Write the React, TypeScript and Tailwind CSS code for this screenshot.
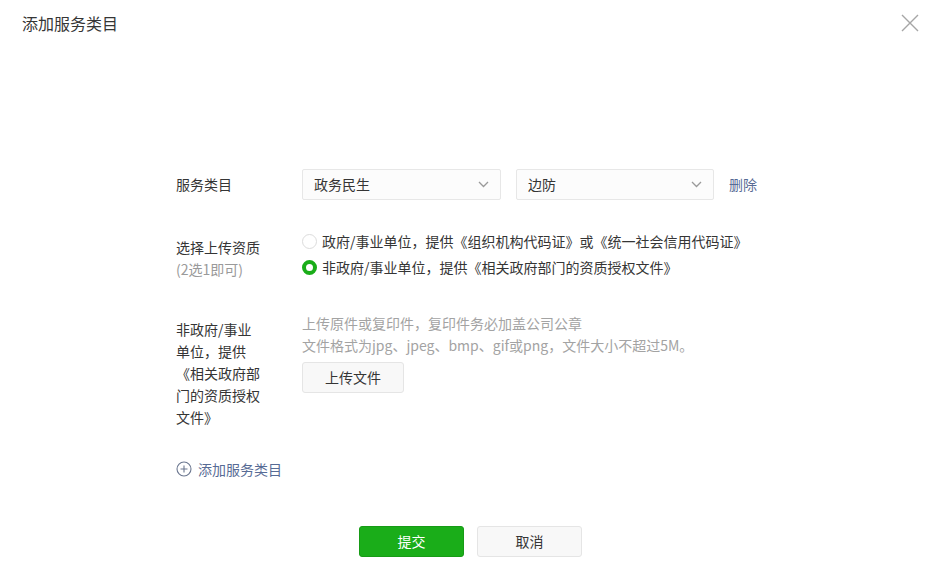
import React, { useState } from 'react';

const font = { fontFamily: '"Noto Sans CJK SC", "Noto Sans", sans-serif' };

const Chevron: React.FC = () => (
    <svg width="11" height="7" viewBox="0 0 11 7" fill="none">
        <path d="M1 1l4.5 4.5L10 1" stroke="#9a9a9a" strokeWidth="1.3" />
    </svg>
);

const Select: React.FC<{ value: string; width: string }> = ({ value, width }) => (
    <div className={`${width} h-[31px] flex items-center justify-between pl-[11px] pr-[11px] border border-[#e7e7e7] bg-[#fcfcfc] rounded-[2px] text-[14px] text-[#353535]`}>
        <span>{value}</span>
        <Chevron />
    </div>
);

const Radio: React.FC<{ checked: boolean; label: string; onClick: () => void }> = ({ checked, label, onClick }) => (
    <div className="h-[26px] flex items-center cursor-pointer" onClick={onClick}>
        {checked ? (
            <span className="w-[15px] h-[15px] rounded-full border-[4px] border-[#1aad19] bg-white box-border" />
        ) : (
            <span className="w-[15px] h-[15px] rounded-full border border-[#dcdcdc] bg-white box-border" />
        )}
        <span className="ml-[5px] text-[14px] text-[#353535]">{label}</span>
    </div>
);

export default function App() {
    const [choice, setChoice] = useState(1);

    return (
        <div className="w-[941px] h-[577px] bg-white relative overflow-hidden" style={font}>
            <div className="h-[46px] flex items-center pl-[22px] text-[16px] text-[#353535]">添加服务类目</div>
            <button className="absolute top-[13px] right-[21px] w-[20px] h-[20px]">
                <svg width="20" height="20" viewBox="0 0 20 20" fill="none">
                    <path d="M2 2l16 16M18 2L2 18" stroke="#a6a6a6" strokeWidth="1.4" />
                </svg>
            </button>

            <div className="mt-[123px] ml-[176px]">
                {/* 服务类目 */}
                <div className="flex items-center h-[31px]">
                    <div className="w-[126px] text-[14px] text-[#353535]">服务类目</div>
                    <Select value="政务民生" width="w-[199px]" />
                    <div className="ml-[15px]">
                        <Select value="边防" width="w-[198px]" />
                    </div>
                    <a className="ml-[15px] text-[14px] text-[#576b95] cursor-pointer">删除</a>
                </div>

                {/* 选择上传资质 */}
                <div className="flex mt-[28px]">
                    <div className="w-[126px] pt-[8px] text-[14px] leading-[22px]">
                        <div className="text-[#353535]">选择上传资质</div>
                        <div className="text-[#9a9a9a]">(2选1即可)</div>
                    </div>
                    <div className="flex flex-col">
                        <Radio checked={choice === 0} onClick={() => setChoice(0)} label="政府/事业单位，提供《组织机构代码证》或《统一社会信用代码证》" />
                        <Radio checked={choice === 1} onClick={() => setChoice(1)} label="非政府/事业单位，提供《相关政府部门的资质授权文件》" />
                    </div>
                </div>

                {/* 上传 */}
                <div className="flex mt-[32px]">
                    <div className="w-[126px] pt-[6px]">
                        <div className="w-[86px] text-[14px] leading-[22px] text-[#353535]">非政府/事业单位，提供《相关政府部门的资质授权文件》</div>
                    </div>
                    <div className="flex flex-col items-start">
                        <div className="text-[14px] leading-[22px] text-[#a3a3a3]">
                            <div>上传原件或复印件，复印件务必加盖公司公章</div>
                            <div>文件格式为jpg、jpeg、bmp、gif或png，文件大小不超过5M。</div>
                        </div>
                        <button className="mt-[6px] w-[102px] h-[31px] border border-[#e5e5e5] bg-[#f8f8f8] rounded-[3px] text-[14px] text-[#353535]">上传文件</button>
                    </div>
                </div>

                {/* 添加服务类目 */}
                <div className="flex items-center mt-[30px] h-[22px] text-[14px] text-[#576b95] cursor-pointer">
                    <svg width="16" height="16" viewBox="0 0 16 16" fill="none">
                        <circle cx="8" cy="8" r="7" stroke="#6b7790" strokeWidth="1.1" />
                        <path d="M8 4.5v7M4.5 8h7" stroke="#6b7790" strokeWidth="1.1" />
                    </svg>
                    <span className="ml-[6px]">添加服务类目</span>
                </div>
            </div>

            <div className="flex justify-center gap-[13px] mt-[46px]">
                <button className="w-[105px] h-[31px] bg-[#1aad19] border border-[#179b16] rounded-[3px] text-[14px] text-white">提交</button>
                <button className="w-[105px] h-[31px] bg-[#f8f8f8] border border-[#e5e5e5] rounded-[3px] text-[14px] text-[#353535]">取消</button>
            </div>
        </div>
    );
}
